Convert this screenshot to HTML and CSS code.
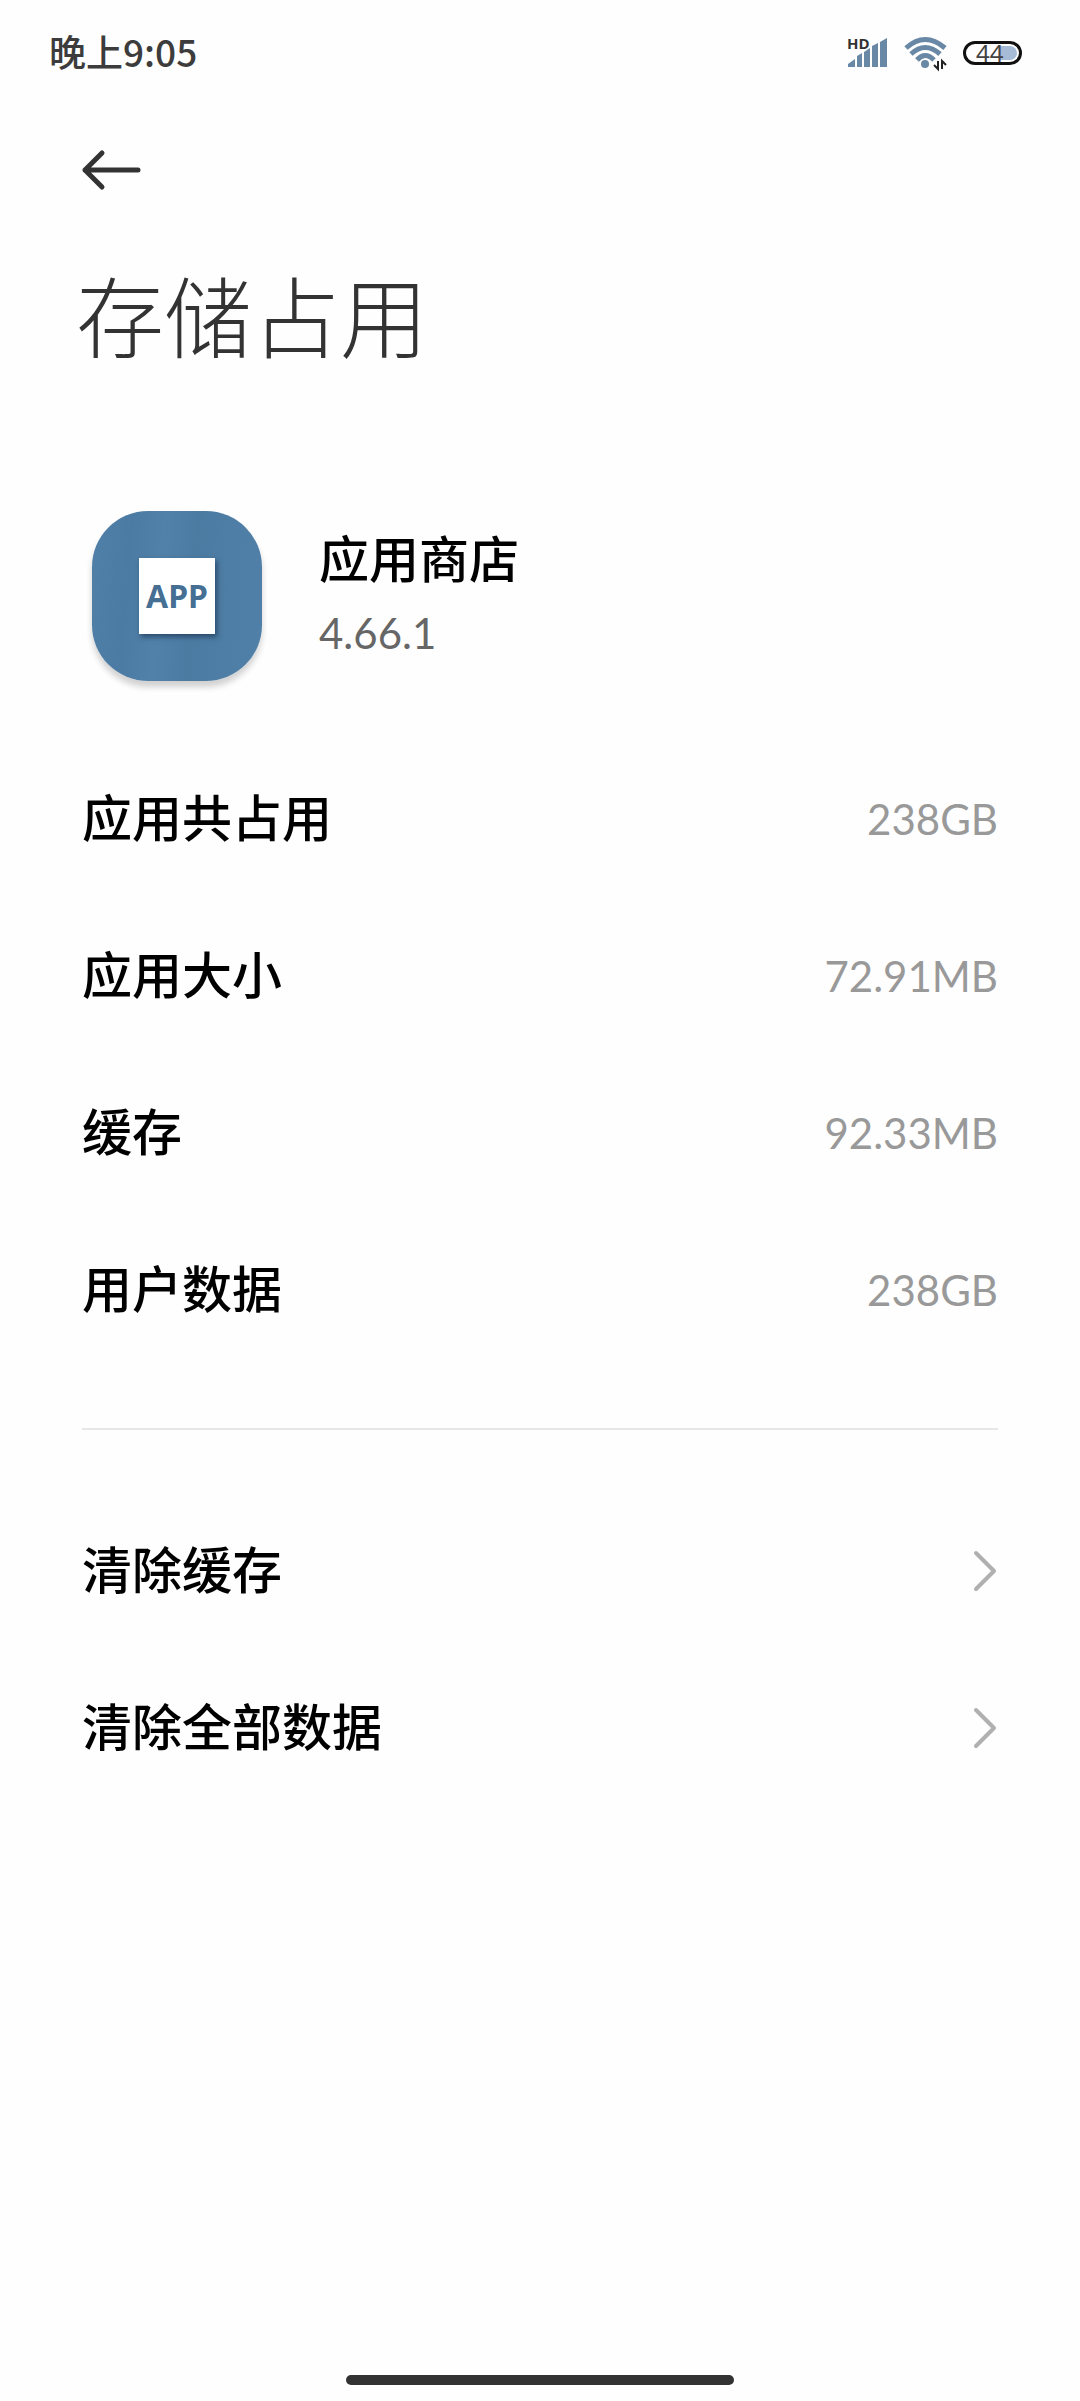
FILE: index.html
```html
<!DOCTYPE html>
<html lang="zh-CN">
<head>
  <meta charset="UTF-8" />
  <meta name="viewport" content="width=device-width, initial-scale=1" />
  <title>存储占用</title>
  <link rel="stylesheet" href="styles.css">
</head>
<body>

  <div class="status-bar">
    <span class="time">晚上9:05</span>
    <div class="status-icons">
      <svg class="signal" width="42" height="38" viewBox="0 -4 42 38" role="img" aria-label="HD">
        <g fill="#6888a6">
          <path d="M1 29V26L8 21V29Z" />
          <path d="M10 29V18L15 15V29Z" />
          <path d="M17 29V14L23 10V29Z" />
          <path d="M25 29V8L31 5V29Z" />
          <path d="M33 29V4L40 0V29Z" />
        </g>
        <text class="hd" x="0" y="11">HD</text>
      </svg>
      <svg class="wifi" width="44" height="34" viewBox="0 0 44 34" aria-hidden="true">
        <g fill="none" stroke="#6888a6" stroke-width="5">
          <path d="M2 12Q21 -5 41 12" />
          <path d="M7 18Q21 5 36 18" />
          <path d="M13 24Q21 15 30 24" />
        </g>
        <circle cx="21" cy="28" r="4" fill="#6888a6" />
        <path d="M34 25V33L30 29M38 33V25L42 29" fill="none" stroke="#222" stroke-width="2" />
      </svg>
      <div class="battery"><span>44</span></div>
    </div>
  </div>

  <header>
    <button class="back" type="button" aria-label="返回">
      <svg width="60" height="42" viewBox="0 0 60 42" fill="none" stroke="#333" stroke-width="5" stroke-linecap="round" stroke-linejoin="round">
        <path d="M20 3L3 20L20 37M3 20H56" />
      </svg>
    </button>
    <h1>存储占用</h1>
  </header>

  <main>
    <section class="app">
      <div class="app-icon"><span>APP</span></div>
      <div class="app-info">
        <h2>应用商店</h2>
        <p>4.66.1</p>
      </div>
    </section>

    <dl class="list">
      <div class="row"><dt>应用共占用</dt><dd>238GB</dd></div>
      <div class="row"><dt>应用大小</dt><dd>72.91MB</dd></div>
      <div class="row"><dt>缓存</dt><dd>92.33MB</dd></div>
      <div class="row"><dt>用户数据</dt><dd>238GB</dd></div>
    </dl>

    <hr>

    <div class="list">
      <button class="row" type="button">
        <span>清除缓存</span>
        <svg width="24" height="42" viewBox="0 0 24 42" fill="none" stroke="#b0b0b0" stroke-width="4" stroke-linecap="round" stroke-linejoin="round">
          <path d="M2 3L20 21L2 39" />
        </svg>
      </button>
      <button class="row" type="button">
        <span>清除全部数据</span>
        <svg width="24" height="42" viewBox="0 0 24 42" fill="none" stroke="#b0b0b0" stroke-width="4" stroke-linecap="round" stroke-linejoin="round">
          <path d="M2 3L20 21L2 39" />
        </svg>
      </button>
    </div>
  </main>

  <div class="home-bar"></div>

</body>
</html>
```
FILE: styles.css
```css
/* Base Styles */
* {
  box-sizing: border-box;
}

body {
  margin: 0;
  min-height: 100vh;
  display: flex;
  flex-direction: column;
  font-family: Lato, "Noto Sans CJK SC", sans-serif;
  background: #fefefe;
  color: #000;
}

button {
  border: none;
  padding: 0;
  background: none;
  color: inherit;
  font-family: inherit;
  cursor: pointer;
}

svg {
  display: block;
  overflow: visible;
}

/* Status bar */
.status-bar {
  display: flex;
  justify-content: space-between;
  align-items: center;
  height: 106px;
  padding: 0 58px 0 49px;
}

.time {
  padding-bottom: 4px;
  font-size: 37px;
  font-weight: 500;
  line-height: 40px;
  color: #3c3c3c;
  font-family: "Noto Sans CJK SC", sans-serif;
}

.status-icons {
  display: flex;
  align-items: center;
  gap: 15px;
}

.hd {
  font: 700 15px "Open Sans", sans-serif;
  fill: #333;
}

.battery {
  width: 59px;
  height: 24px;
  border: 3px solid #111;
  border-radius: 12px;
  background: linear-gradient(90deg, #fff 64%, #a5bbd6 64%);
  background-clip: content-box;
  padding: 2px;
  display: flex;
  align-items: center;
  padding-left: 10px;
}

.battery span {
  font: 400 24px/20px "Noto Sans", sans-serif;
  color: #444;
}

/* Header */
header {
  padding: 44px 82px 0;
}

.back {
  display: block;
}

h1 {
  margin: 60px 0 0 -6px;
  font-size: 88px;
  font-weight: 300;
  line-height: 130px;
  color: #333;
}

/* App info */
main {
  padding: 129px 82px 0;
}

.app {
  display: flex;
  align-items: center;
  gap: 57px;
  padding-left: 10px;
  margin-bottom: 59px;
}

.app-icon {
  width: 170px;
  height: 170px;
  border-radius: 56px;
  background: linear-gradient(95deg, #507fa7, #4b7aa2 22%, #5181a9 40%, #4c7ba2 58%, #5080a8);
  box-shadow: 0 6px 6px rgba(0, 0, 0, 0.18);
  display: flex;
  align-items: center;
  justify-content: center;
}

.app-icon span {
  width: 76px;
  background: #fff;
  color: #466f94;
  text-align: center;
  font: 700 32px/76px "Noto Sans", sans-serif;
  box-shadow: 2px 3px 5px rgba(20, 40, 70, 0.6);
}

.app-info h2 {
  margin: 0;
  font-size: 50px;
  font-weight: 500;
  line-height: 74px;
}

.app-info p {
  margin: 0;
  font-size: 42px;
  line-height: 74px;
  color: #666;
}

/* Rows */
.list {
  margin: 0;
}

.row {
  display: flex;
  justify-content: space-between;
  align-items: center;
  width: 100%;
  height: 157px;
  font-size: 50px;
  font-weight: 500;
}

.row dt,
.row span {
  padding-bottom: 8px;
}

.row dd {
  margin: 0;
  font-size: 42px;
  font-weight: 400;
  color: #999;
}

hr {
  margin: 60px 0 62px;
  border: none;
  border-top: 2px solid #e6e8e8;
}

/* Home indicator */
.home-bar {
  width: 36%;
  height: 10px;
  margin: auto auto 16px;
  border-radius: 5px;
  background: #333;
}
```
